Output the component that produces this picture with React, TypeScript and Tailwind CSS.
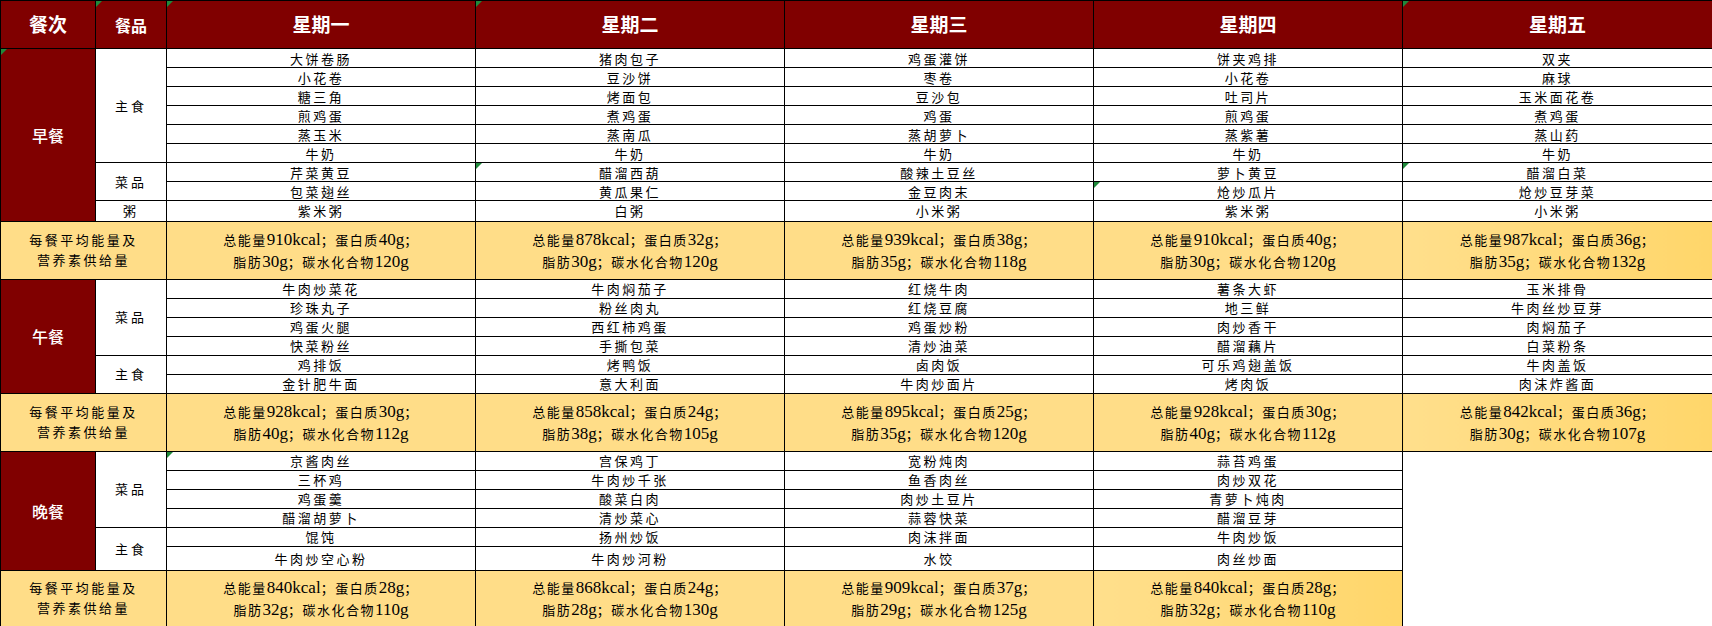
import type { ReactNode } from 'react';

const DAYS = ['星期一', '星期二', '星期三', '星期四', '星期五'];

type Group = { label: string; days: string[][] };
type Section = {
  meal: string;
  groups: Group[];
  nutrition: [string, string][];
};

const sections: Section[] = [
  {
    meal: '早餐',
    groups: [
      {
        label: '主食',
        days: [
          ['大饼卷肠', '小花卷', '糖三角', '煎鸡蛋', '蒸玉米', '牛奶'],
          ['猪肉包子', '豆沙饼', '烤面包', '煮鸡蛋', '蒸南瓜', '牛奶'],
          ['鸡蛋灌饼', '枣卷', '豆沙包', '鸡蛋', '蒸胡萝卜', '牛奶'],
          ['饼夹鸡排', '小花卷', '吐司片', '煎鸡蛋', '蒸紫薯', '牛奶'],
          ['双夹', '麻球', '玉米面花卷', '煮鸡蛋', '蒸山药', '牛奶'],
        ],
      },
      {
        label: '菜品',
        days: [
          ['芹菜黄豆', '包菜翅丝'],
          ['醋溜西葫', '黄瓜果仁'],
          ['酸辣土豆丝', '金豆肉末'],
          ['萝卜黄豆', '炝炒瓜片'],
          ['醋溜白菜', '炝炒豆芽菜'],
        ],
      },
      {
        label: '粥',
        days: [['紫米粥'], ['白粥'], ['小米粥'], ['紫米粥'], ['小米粥']],
      },
    ],
    nutrition: [
      ['总能量910kcal；蛋白质40g；', '脂肪30g；碳水化合物120g'],
      ['总能量878kcal；蛋白质32g；', '脂肪30g；碳水化合物120g'],
      ['总能量939kcal；蛋白质38g；', '脂肪35g；碳水化合物118g'],
      ['总能量910kcal；蛋白质40g；', '脂肪30g；碳水化合物120g'],
      ['总能量987kcal；蛋白质36g；', '脂肪35g；碳水化合物132g'],
    ],
  },
  {
    meal: '午餐',
    groups: [
      {
        label: '菜品',
        days: [
          ['牛肉炒菜花', '珍珠丸子', '鸡蛋火腿', '快菜粉丝'],
          ['牛肉焖茄子', '粉丝肉丸', '西红柿鸡蛋', '手撕包菜'],
          ['红烧牛肉', '红烧豆腐', '鸡蛋炒粉', '清炒油菜'],
          ['薯条大虾', '地三鲜', '肉炒香干', '醋溜藕片'],
          ['玉米排骨', '牛肉丝炒豆芽', '肉焖茄子', '白菜粉条'],
        ],
      },
      {
        label: '主食',
        days: [
          ['鸡排饭', '金针肥牛面'],
          ['烤鸭饭', '意大利面'],
          ['卤肉饭', '牛肉炒面片'],
          ['可乐鸡翅盖饭', '烤肉饭'],
          ['牛肉盖饭', '肉沫炸酱面'],
        ],
      },
    ],
    nutrition: [
      ['总能量928kcal；蛋白质30g；', '脂肪40g；碳水化合物112g'],
      ['总能量858kcal；蛋白质24g；', '脂肪38g；碳水化合物105g'],
      ['总能量895kcal；蛋白质25g；', '脂肪35g；碳水化合物120g'],
      ['总能量928kcal；蛋白质30g；', '脂肪40g；碳水化合物112g'],
      ['总能量842kcal；蛋白质36g；', '脂肪30g；碳水化合物107g'],
    ],
  },
  {
    meal: '晚餐',
    groups: [
      {
        label: '菜品',
        days: [
          ['京酱肉丝', '三杯鸡', '鸡蛋羹', '醋溜胡萝卜'],
          ['宫保鸡丁', '牛肉炒千张', '酸菜白肉', '清炒菜心'],
          ['宽粉炖肉', '鱼香肉丝', '肉炒土豆片', '蒜蓉快菜'],
          ['蒜苔鸡蛋', '肉炒双花', '青萝卜炖肉', '醋溜豆芽'],
        ],
      },
      {
        label: '主食',
        days: [
          ['馄饨', '牛肉炒空心粉'],
          ['扬州炒饭', '牛肉炒河粉'],
          ['肉沫拌面', '水饺'],
          ['牛肉炒饭', '肉丝炒面'],
        ],
      },
    ],
    nutrition: [
      ['总能量840kcal；蛋白质28g；', '脂肪32g；碳水化合物110g'],
      ['总能量868kcal；蛋白质24g；', '脂肪28g；碳水化合物130g'],
      ['总能量909kcal；蛋白质37g；', '脂肪29g；碳水化合物125g'],
      ['总能量840kcal；蛋白质28g；', '脂肪32g；碳水化合物110g'],
    ],
  },
];

// little green corner flags like excel shows; key = section-row-col
const flags = new Set(['b-6-1', 'b-7-3', 'b-6-4', 'd-0-0']);

function Flag() {
  return (
    <span className="absolute left-0 top-0 h-0 w-0 border-t-[6px] border-r-[6px] border-t-[#1f8a3b] border-r-transparent" />
  );
}

function Mixed({ text }: { text: string }) {
  const parts = text.split(/([0-9A-Za-z]+)/).filter(Boolean);
  return (
    <>
      {parts.map((p, i) =>
        /[0-9A-Za-z]/.test(p) ? (
          <span key={i} className="font-['Liberation_Serif',serif] text-[17px] tracking-normal">
            {p}
          </span>
        ) : (
          <span key={i} className="text-[13px] tracking-[1.5px]">
            {p}
          </span>
        )
      )}
    </>
  );
}

const cell = 'border border-black p-0 text-center align-middle';
const item = `${cell} relative bg-white text-[13px] leading-none tracking-[2.5px] text-black`;
const yellow = 'bg-[#ffdd88]';

function NutritionRow({ data, tall }: { data: [string, string][]; tall: string }) {
  return (
    <tr className={tall}>
      <td colSpan={2} className={`${cell} ${yellow} text-[13px] leading-[20px] tracking-[2.5px]`}>
        <div>每餐平均能量及</div>
        <div>营养素供给量</div>
      </td>
      {data.map((lines, i) => {
        const end = i === data.length - 1;
        return (
          <td
            key={i}
            className={`${cell} leading-[20px] ${
              end ? 'bg-gradient-to-r from-[#ffdf8c] to-[#ffd66a]' : yellow
            }`}
          >
            <div>
              <Mixed text={lines[0]} />
            </div>
            <div>
              <Mixed text={lines[1]} />
            </div>
          </td>
        );
      })}
    </tr>
  );
}

function SectionRows({ section, idx }: { section: Section; idx: number }) {
  const key = ['b', 'l', 'd'][idx];
  const total = section.groups.reduce((n, g) => n + g.days[0].length, 0);
  const rows: ReactNode[] = [];
  let r = 0;
  section.groups.forEach((g, gi) => {
    const count = g.days[0].length;
    for (let k = 0; k < count; k++) {
      const isLast = idx === 2 && r === total - 1;
      rows.push(
        <tr key={`${gi}-${k}`} className={isLast ? 'h-[24px]' : 'h-[19px]'}>
          {r === 0 && (
            <td
              rowSpan={total}
              className={`${cell} relative bg-[#800000] text-[16px] font-medium text-white`}
            >
              {idx === 0 && <Flag />}
              {section.meal}
            </td>
          )}
          {k === 0 && (
            <td rowSpan={count} className={`${cell} bg-white text-[13px] tracking-[3px] text-black`}>
              {g.label}
            </td>
          )}
          {g.days.map((d, di) => (
            <td key={di} className={item}>
              {flags.has(`${key}-${r}-${di}`) && <Flag />}
              {d[k]}
            </td>
          ))}
          {/* friday dinner is empty: one white block down to the bottom */}
          {r === 0 && section.groups[0].days.length < 5 && (
            <td rowSpan={total + 1} className={`${cell} bg-white`} />
          )}
        </tr>
      );
      r++;
    }
  });
  return (
    <>
      {rows}
      <NutritionRow data={section.nutrition} tall={idx === 2 ? 'h-[56px]' : 'h-[58px]'} />
    </>
  );
}

export default function App() {
  return (
    <div className="h-[626px] w-[1712px] bg-white font-['Noto_Sans_CJK_SC',sans-serif]">
      <table className="w-[1712px] table-fixed border-collapse border border-black">
        <colgroup>
          <col className="w-[95px]" />
          <col className="w-[71px]" />
          <col className="w-[309px]" />
          <col className="w-[309px]" />
          <col className="w-[309px]" />
          <col className="w-[309px]" />
          <col className="w-[310px]" />
        </colgroup>
        <tbody>
          <tr className="h-[48px] bg-[#800000] font-bold text-white">
            <td className={`${cell} text-[19px]`}>餐次</td>
            <td className={`${cell} relative text-[16px]`}>
              <Flag />
              餐品
            </td>
            {DAYS.map((d, i) => (
              <td key={d} className={`${cell} relative text-[19px]`}>
                {(i === 0 || i === 1 || i === 4) && <Flag />}
                {d}
              </td>
            ))}
          </tr>
          {sections.map((s, i) => (
            <SectionRows key={s.meal} section={s} idx={i} />
          ))}
        </tbody>
      </table>
    </div>
  );
}
